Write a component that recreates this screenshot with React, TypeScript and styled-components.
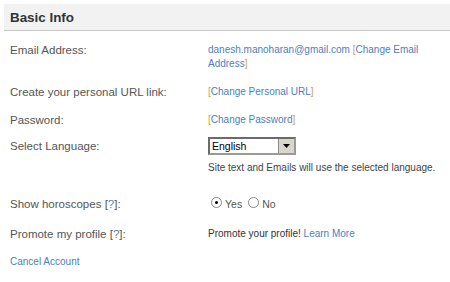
import styled, { createGlobalStyle } from 'styled-components'

const GlobalStyle = createGlobalStyle`
  body {
    margin: 0;
    background: #ffffff;
    font-family: "Liberation Sans", Arial, sans-serif;
  }
`

const Page = styled.div`
  padding: 4px 0 0 4px;
  width: 450px;
  height: 282px;
  box-sizing: border-box;
  overflow: hidden;
`

const Header = styled.div`
  height: 26px;
  background: #f2f2f2;
  border-bottom: 1px solid #c8c8c8;
  padding-left: 6px;
  display: flex;
  align-items: center;
`

const HeaderTitle = styled.h2`
  margin: 0;
  font-size: 13.4px;
  font-weight: bold;
  color: #333333;
`

const Form = styled.div`
  padding: 11px 0 0 6px;
  display: grid;
  grid-template-columns: 198px 234px;
`

const Label = styled.div<{ $h: number }>`
  font-size: 11.5px;
  color: #555555;
  height: ${p => p.$h}px;
  line-height: 16px;
`

const Value = styled.div<{ $h: number }>`
  box-sizing: border-box;
  font-size: 10px;
  color: #333333;
  height: ${p => p.$h}px;
  line-height: 14px;
  padding-top: 1px;
`

const Line = styled.div`
  white-space: nowrap;
`

const Link = styled.a`
  color: #4b80c4;
  text-decoration: none;
  cursor: pointer;
`

const Bracket = styled.span`
  color: #d99a55;
`

const Help = styled.span`
  color: #4b80c4;
`

const SelectBox = styled.div`
  width: 88px;
  height: 18px;
  box-sizing: border-box;
  border: 2px solid #6b6b6b;
  border-right-color: #9a9a9a;
  border-bottom-color: #9a9a9a;
  display: flex;
  align-items: stretch;
  background: #ffffff;
  margin-top: -2px;
`

const SelectText = styled.span`
  flex: 1;
  font-size: 10.5px;
  color: #000000;
  line-height: 14px;
  padding-left: 2px;
`

const SelectArrow = styled.span`
  width: 15px;
  background: #d8d6cf;
  border-left: 1px solid #8a8a8a;
  display: flex;
  align-items: center;
  justify-content: center;
`

const Hint = styled.div`
  font-size: 10px;
  color: #444444;
  margin-top: 6px;
  white-space: nowrap;
`

const RadioGroup = styled.div`
  display: flex;
  align-items: center;
  gap: 3px;
  padding-left: 3px;
  color: #555555;
  font-size: 10.5px;
`

const Radio = styled.span<{ $on?: boolean }>`
  width: 9px;
  height: 9px;
  border-radius: 50%;
  border: 1px solid #888888;
  background: #ffffff;
  display: inline-flex;
  align-items: center;
  justify-content: center;
  margin-top: -3px;
  &::after {
    content: '';
    width: 3px;
    height: 3px;
    border-radius: 50%;
    background: ${p => (p.$on ? '#000000' : 'transparent')};
  }
`

const RadioText = styled.span`
  margin-right: 3px;
`

const CancelLink = styled(Link)`
  font-size: 10px;
`

const Arrow = () => (
  <svg width="7" height="4" viewBox="0 0 7 4">
    <path d="M0 0 H7 L3.5 4 Z" fill="#000" />
  </svg>
)

const HelpTag = () => (
  <>
    [<Help>?</Help>]
  </>
)

export default function App() {
  return (
    <>
      <GlobalStyle />
      <Page>
        <Header>
          <HeaderTitle>Basic Info</HeaderTitle>
        </Header>
        <Form>
          <Label $h={42}>Email Address:</Label>
          <Value $h={42}>
            <Line>
              <Link>danesh.manoharan@gmail.com</Link> <Bracket>[</Bracket>
              <Link>Change Email</Link>
            </Line>
            <Line>
              <Link>Address</Link>
              <Bracket>]</Bracket>
            </Line>
          </Value>

          <Label $h={28}>Create your personal URL link:</Label>
          <Value $h={28}>
            <Bracket>[</Bracket>
            <Link>Change Personal URL</Link>
            <Bracket>]</Bracket>
          </Value>

          <Label $h={26}>Password:</Label>
          <Value $h={26}>
            <Bracket>[</Bracket>
            <Link>Change Password</Link>
            <Bracket>]</Bracket>
          </Value>

          <Label $h={58}>Select Language:</Label>
          <Value $h={58}>
            <SelectBox>
              <SelectText>English</SelectText>
              <SelectArrow>
                <Arrow />
              </SelectArrow>
            </SelectBox>
            <Hint>Site text and Emails will use the selected language.</Hint>
          </Value>

          <Label $h={30}>
            Show horoscopes <HelpTag />:
          </Label>
          <Value $h={30}>
            <RadioGroup>
              <Radio $on />
              <RadioText>Yes</RadioText>
              <Radio />
              <RadioText>No</RadioText>
            </RadioGroup>
          </Value>

          <Label $h={27}>
            Promote my profile <HelpTag />:
          </Label>
          <Value $h={27}>
            Promote your profile! <Link>Learn More</Link>
          </Value>

          <Label $h={20}>
            <CancelLink>Cancel Account</CancelLink>
          </Label>
        </Form>
      </Page>
    </>
  )
}
